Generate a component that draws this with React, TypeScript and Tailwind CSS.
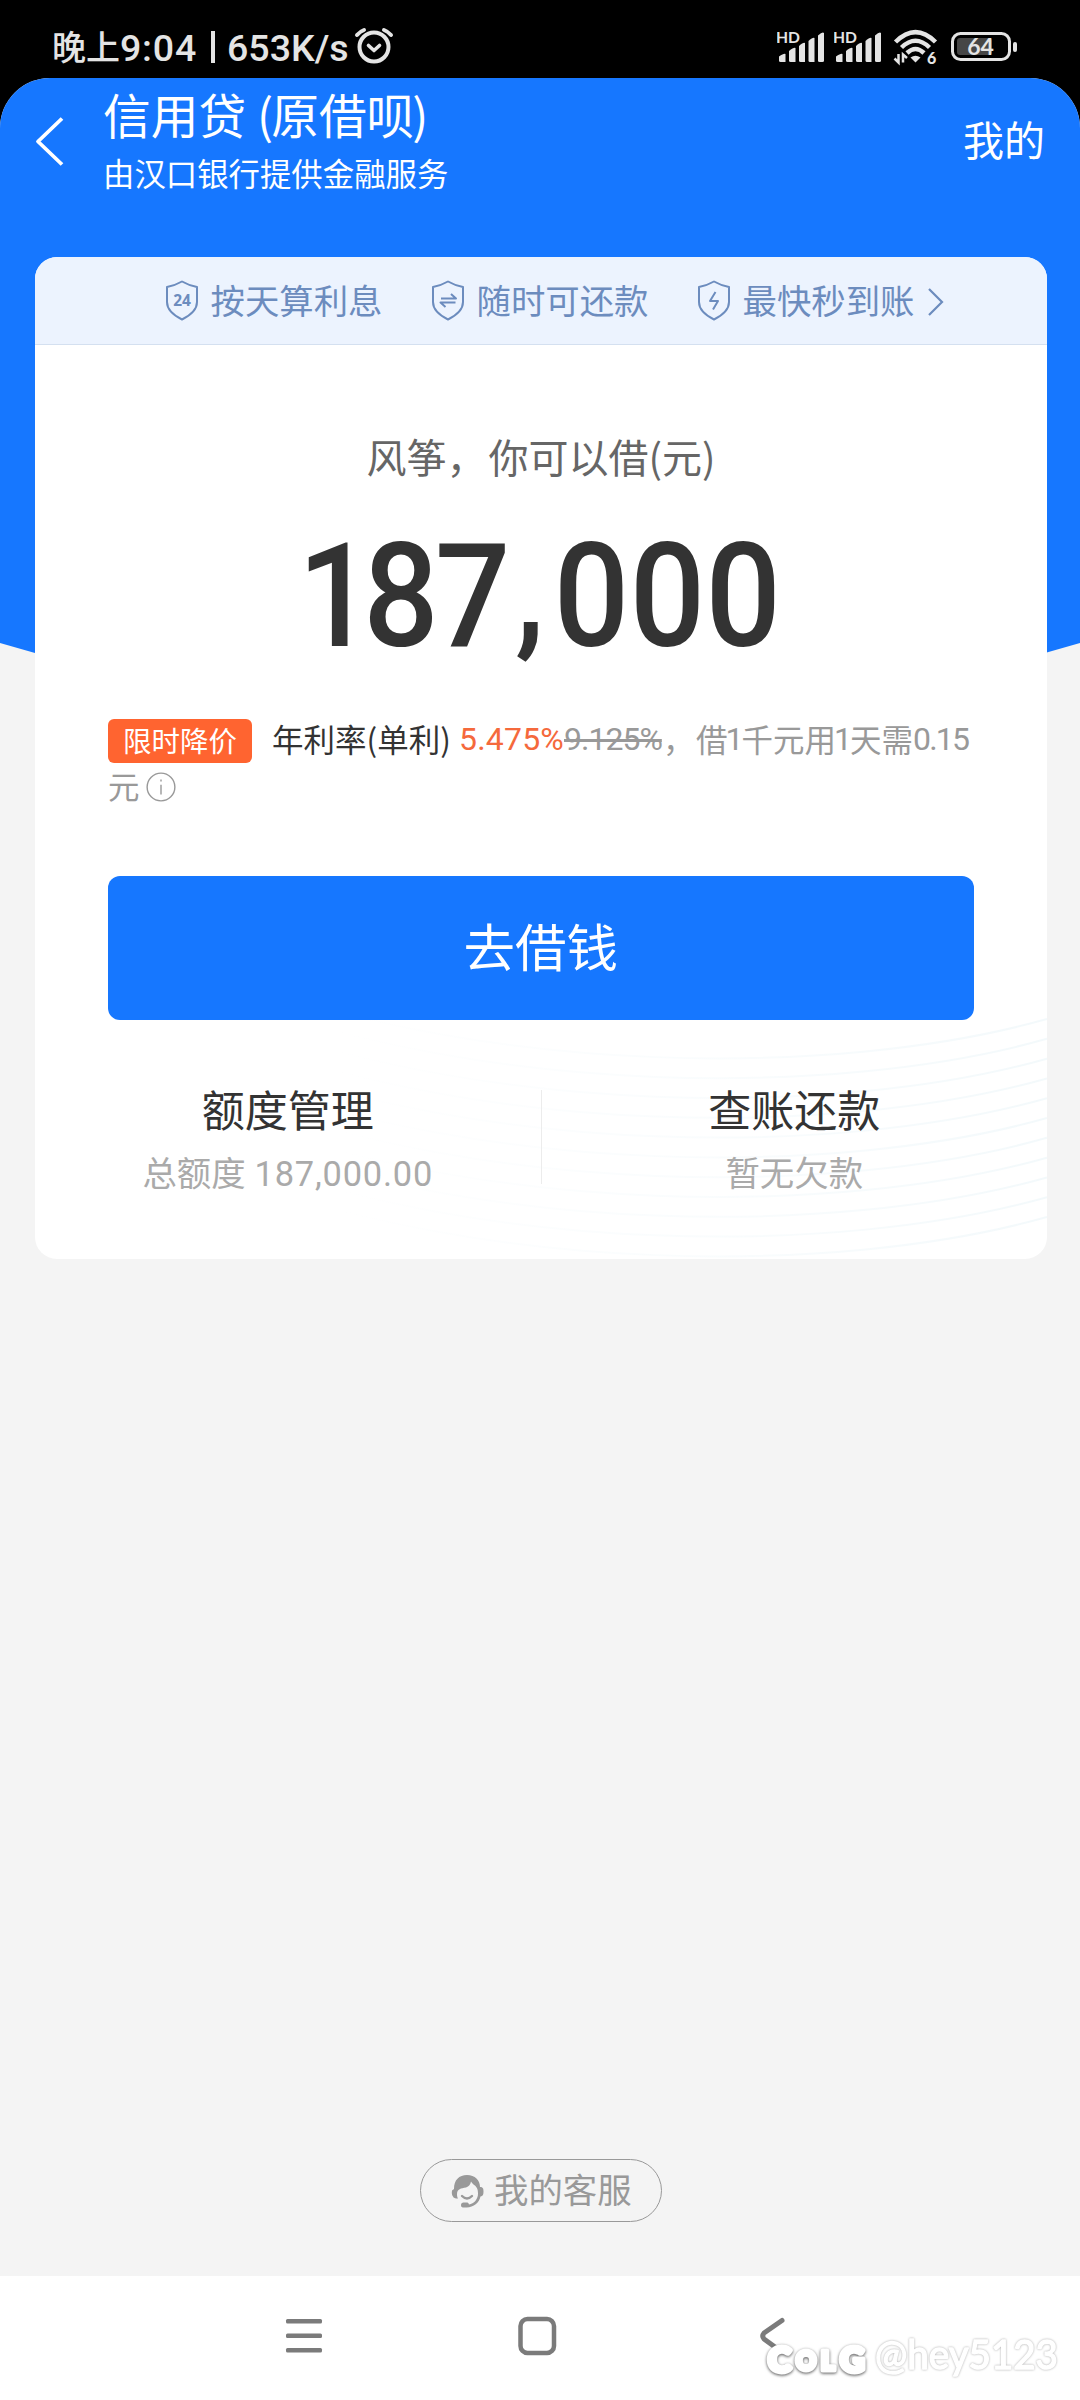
import React from "react";

const CJK = "font-['Noto_Sans_CJK_SC',sans-serif]";

function SignalBars() {
  return (
    <svg className="h-[36px] w-[50px]" viewBox="0 0 50 36" fill="#e4e4e4">
      <text x="-1" y="13.5" fontFamily="Lato, sans-serif" fontWeight="700" fontSize="15.5" textLength="24" lengthAdjust="spacingAndGlyphs">HD</text>
      <path d="M2 27.5Q7 24 8.500 25V33H3.500Q2 33 2 31.500Z" />
      <path d="M12 22Q17 18 18.500 19V33H13.500Q12 33 12 31.500Z" />
      <path d="M22 17Q26.500 13 28 14V33H23.500Q22 33 22 31.500Z" />
      <path d="M31.500 12Q36 8 37.500 9V33H33Q31.500 33 31.500 31.500Z" />
      <path d="M41 6.500Q45.500 2.500 47 4V31.500Q47 33 45.500 33H42.500Q41 33 41 31.500Z" />
    </svg>
  );
}

function StatusBar() {
  return (
    <div className="flex h-[78px] shrink-0 items-start text-[#e4e4e4]">
      <div className="ml-[52px] mt-[24px] flex h-[48px] items-center whitespace-nowrap text-[33px] font-medium leading-[48px]">
        <span className="mt-[-5px] w-[68px] text-[34px]">晚上</span>
        <span className="w-[91px] font-['Roboto',sans-serif] text-[37.500px] font-medium tracking-[0.800px]">9:04</span>
        <span className="mr-[12px] mt-[-2px] h-[32px] w-[4px] bg-[#e4e4e4]" />
        <span className="font-['Roboto',sans-serif] text-[37.500px] font-medium">653K/s</span>
      </div>
      <svg className="absolute left-[353px] top-[26px] h-[40px] w-[42px]" viewBox="0 0 42 40" fill="none" stroke="#e4e4e4" strokeWidth="4" strokeLinecap="round" strokeLinejoin="round">
        <circle cx="21" cy="21" r="14.500" />
        <path d="M15.500 19.500l5.500 5 5.500-5" strokeWidth="3.600" />
        <path d="M4 9Q7 5.500 11 4M38 9Q35 5.500 31 4" />
      </svg>
      <div className="ml-auto mr-[61px] mt-[29px] flex">
        <SignalBars />
        <span className="w-[7px]" />
        <SignalBars />
        <svg className="ml-[9px] h-[38px] w-[46px]" viewBox="0 0 46 38" fill="none" stroke="#e4e4e4" strokeWidth="4.500">
          <path d="M2.500 13Q22.500 -7 42.500 13" />
          <path d="M8.500 18.500Q22.500 5 36.500 18.500" />
          <path d="M14 24Q22.500 16 31 24" />
          <path d="M17.500 28.500Q22.500 25 27.500 28.500L22.500 33.500Z" fill="#e4e4e4" stroke="none" />
          <path d="M5.500 25v8.500l-4-4M10 33.500v-8l4 3.500" strokeWidth="2.500" />
          <text x="34" y="35" fontFamily="Lato, sans-serif" fontWeight="900" fontSize="16" fill="#e4e4e4" stroke="none">6</text>
        </svg>
        <svg className="ml-[12px] mt-[2px] h-[32px] w-[68px]" viewBox="0 0 68 32">
          <rect x="1.500" y="2.500" width="57" height="26" rx="8" fill="none" stroke="#e4e4e4" strokeWidth="3" />
          <rect x="6" y="7" width="35" height="17" rx="3" fill="#464646" />
          <rect x="62" y="11" width="4" height="10" rx="2" fill="#e4e4e4" />
          <text x="29.500" y="24" textAnchor="middle" fontFamily="Lato, sans-serif" fontWeight="700" fontSize="23" fill="#e4e4e4">64</text>
        </svg>
      </div>
    </div>
  );
}

function Header() {
  return (
    <header className="flex h-[178.500px] text-white">
      <svg className="ml-[34px] mt-[37px] h-[52px] w-[32px]" viewBox="0 0 32 52" fill="none" stroke="white" strokeWidth="3.800" strokeLinejoin="round">
        <path d="M28 3.500L4 26.500 28 49.500" />
      </svg>
      <div className="ml-[37px] mt-[6px] whitespace-nowrap">
        <h1 className="h-[60px] text-[47.700px] font-normal leading-[60px]">
          信用贷<span className="ml-[11px] mr-[-2px]">(</span>原借呗<span className="ml-[-2px]">)</span>
        </h1>
        <p className="mt-[9px] h-[40px] text-[31.400px] leading-[40px]">由汉口银行提供金融服务</p>
      </div>
      <div className="ml-auto mr-[35px] mt-[34px] h-[56px] text-[41px] leading-[52px]">我的</div>
    </header>
  );
}

function Shield({ children }: { children: React.ReactNode }) {
  return (
    <svg className="mr-[11.500px] mt-[2px] h-[42px] w-[34px] shrink-0" viewBox="0 0 34 42" fill="none" stroke="#6c8cbe" strokeWidth="2" strokeLinejoin="round">
      <path d="M17 1.500Q24 5.500 32 7V22Q32 32 17 39.500Q2 32 2 22V7Q10 5.500 17 1.500Z" />
      {children}
    </svg>
  );
}

function Features() {
  return (
    <div className="flex h-[88.500px] items-center border-b border-[#d4e0f0] bg-[#ecf3fe] pl-[130px] text-[34.400px] leading-[48px] text-[#6c8cbe]">
      <div className="flex w-[266px] items-center">
        <Shield>
          <text x="17" y="25.500" textAnchor="middle" fontFamily="Open Sans, sans-serif" fontWeight="700" fontSize="15.500" fill="#6c8cbe" stroke="none">24</text>
        </Shield>
        <span className="mt-[-3px] whitespace-nowrap">按天算利息</span>
      </div>
      <div className="flex w-[266px] items-center">
        <Shield>
          <path d="M10 18.500h15l-5-4.500M24.500 22.500h-15l5 4.500" />
        </Shield>
        <span className="mt-[-3px] whitespace-nowrap">随时可还款</span>
      </div>
      <div className="flex items-center">
        <Shield>
          <path d="M18.500 12l-5.500 9h8l-5 8.500" />
        </Shield>
        <span className="mt-[-3px] whitespace-nowrap">最快秒到账</span>
        <svg className="ml-[13px] mt-[3px] h-[30px] w-[18px]" viewBox="0 0 18 30" fill="none" stroke="#6c8cbe" strokeWidth="2.200">
          <path d="M2 2l13 13L2 28" />
        </svg>
      </div>
    </div>
  );
}

const waves = [0, 1, 2, 3, 4, 5, 6, 7, 8, 9, 10];

function Waves() {
  return (
    <svg className="pointer-events-none absolute bottom-0 left-0 h-[260px] w-[1012px]" viewBox="0 0 1012 260" fill="none">
      <defs>
        <linearGradient id="waveFade" gradientUnits="userSpaceOnUse" x1="300" y1="0" x2="1012" y2="0">
          <stop offset="0" stopColor="#f5fafc" stopOpacity="0" />
          <stop offset="0.500" stopColor="#f5fafc" stopOpacity="0.500" />
          <stop offset="1" stopColor="#f3f9fb" />
        </linearGradient>
      </defs>
      {waves.map((i) => (
        <path
          key={i}
          d="M200 -20C450 75 800 80 1012 20"
          transform={`translate(0 ${i * 19.8})`}
          stroke="url(#waveFade)"
          strokeWidth="2"
        />
      ))}
    </svg>
  );
}

function Column({ title, children }: { title: string; children: React.ReactNode }) {
  return (
    <div className="flex flex-1 flex-col items-center whitespace-nowrap">
      <div className="h-[56px] text-[43px] leading-[56px] text-[#333]">{title}</div>
      <div className="mt-[11px] h-[48px] text-[34.400px] leading-[48px] text-[#aaa]">{children}</div>
    </div>
  );
}

function LoanCard() {
  return (
    <section className="relative ml-[35px] h-[1002.500px] w-[1012px] overflow-hidden rounded-[22px] bg-white">
      <Waves />
      <div className="relative">
        <Features />
        <div className="mt-[84.500px] h-[52px] text-center text-[40px] leading-[52px] text-[#666]">
          风筝，<span className="ml-[2px]">你可以借</span>(元)
        </div>
        <div className="mt-[24px] flex h-[180px] origin-center scale-x-[0.915] justify-center pr-[3px] font-['Roboto',sans-serif] text-[145px] font-medium leading-[180px] text-[#333]">
          <span className="tracking-[-11px]">1</span>
          <span className="tracking-[-4px]">8</span>
          <span>7</span>
          <span className="ml-[5px] mr-[10px] mt-[-8px]">,</span>
          <span className="tracking-[0.500px]">000</span>
        </div>
        <div className="mt-[27.500px] flex h-[50px] items-center whitespace-nowrap pl-[73px] text-[31.500px] leading-[50px] text-[#999]">
          <span className="mr-[20px] mt-[6px] flex h-[44px] w-[144px] shrink-0 items-center justify-center rounded-[6px] bg-[#ff6430] text-[28.500px] text-white">
            <span className="mt-[-3px]">限时降价</span>
          </span>
          <span className="w-[187px] text-[#333]">年利率(单利)</span>
          <span className="mt-[2px] w-[105px] font-['Roboto',sans-serif] text-[32px] tracking-[0.200px] text-[#f5693c]">5.475%</span>
          <span className="mt-[2px] w-[99px] font-['Roboto',sans-serif] text-[32px] tracking-[-1px] line-through decoration-[3px]">9.125%</span>
          <span className="w-[33px]">，</span>
          <span>借</span>
          <span className="mx-[-2px] mt-[2px] font-['Roboto',sans-serif] text-[32px]">1</span>
          <span>千元用</span>
          <span className="mx-[-2px] mt-[2px] font-['Roboto',sans-serif] text-[32px]">1</span>
          <span>天需</span>
          <span className="mt-[2px] font-['Roboto',sans-serif] text-[32px] tracking-[-1.800px]">0.15</span>
        </div>
        <div className="flex h-[45px] items-center pl-[73px] text-[31.500px] leading-[45px] text-[#999]">
          <span>元</span>
          <svg className="ml-[6px] mt-[3px] h-[30px] w-[30px]" viewBox="0 0 32 32" fill="none" stroke="#999" strokeWidth="1.500">
            <circle cx="16" cy="16" r="14.800" />
            <path d="M16 13.500V24M16 8v2" />
          </svg>
        </div>
        <button className="ml-[73px] mt-[68px] block h-[143.500px] w-[865.500px] rounded-[12px] bg-[#1677ff] text-center text-[51.500px] leading-[137px] text-white">
          <span className="block h-full">去借钱</span>
        </button>
        <div className="relative mt-[60px] flex">
          <Column title="额度管理">
            总额度<span className="ml-[9px] font-['Roboto',sans-serif] tracking-[0.800px]">187,000.00</span>
          </Column>
          <div className="mt-[10px] h-[94px] w-px bg-[#ececec]" />
          <Column title="查账还款">暂无欠款</Column>
        </div>
      </div>
    </section>
  );
}

function ServicePill() {
  return (
    <button className="mb-[54px] ml-[420px] mt-auto flex h-[63px] w-[242px] items-center rounded-full border border-[#999] pl-[29px] text-[34.400px] leading-[48px] text-[#999]">
      <svg className="mr-[10px] h-[34px] w-[34px]" viewBox="0 0 34 34" fill="#999">
        <path d="M4 15C4 6 9 1 17 1s13 5 13 12c3 0 3.500 1.500 3.500 4.500S33 22 30.500 22.500C29 29 24 33 16.500 33.500H13c-1.500 0-2-1-2-2.500s1-2.500 2.500-2.500h3c1.500 0 2 .5 2.500 2 5-1 9-5 9-11 0-5-1.500-7-4.500-9-1-1-2-2-2.500-3-.5 3-2 5-5 6-5 1-9 1-9 7 0 2 .5 3 1 4-3 0-4.500-.5-5-2-1-1-1.500-3-1-6z" />
        <path d="M12 22q5 5 10 0" fill="none" stroke="#999" strokeWidth="2.400" strokeLinecap="round" />
      </svg>
      <span className="mt-[-6px] whitespace-nowrap">我的客服</span>
    </button>
  );
}

function NavBar() {
  return (
    <nav className="relative flex h-[124px] shrink-0 items-start bg-white">
      <svg className="ml-[284px] mt-[39px] h-[42px] w-[40px]" viewBox="0 0 40 42" fill="#7b7b7b">
        <rect x="2" y="4" width="36" height="4.500" rx="1.500" />
        <rect x="2" y="18.500" width="36" height="4.500" rx="1.500" />
        <rect x="2" y="33" width="36" height="4.500" rx="1.500" />
      </svg>
      <svg className="ml-[192px] mt-[39px] h-[42px] w-[42px]" viewBox="0 0 42 42" fill="none" stroke="#7b7b7b" strokeWidth="4.500">
        <rect x="4.500" y="4" width="33.500" height="34" rx="7" />
      </svg>
      <svg className="ml-[200px] mt-[39px] h-[42px] w-[30px]" viewBox="0 0 30 42" fill="none" stroke="#7b7b7b" strokeWidth="5" strokeLinecap="round" strokeLinejoin="round">
        <path d="M24 5.500L6 18Q3.500 21 6 24L17 32" />
      </svg>
      <svg className="absolute left-[760px] top-[54px] h-[60px] w-[310px]" viewBox="0 0 310 60">
        <g fontFamily="Lato, sans-serif" fontWeight="900" fill="white" stroke="white" strokeWidth="5" strokeLinejoin="round" className="[filter:drop-shadow(0_1px_1.500px_#555)]">
          <text x="8" y="42" fontSize="35">C</text>
          <text x="36" y="40" fontSize="27" textLength="20" lengthAdjust="spacingAndGlyphs">O</text>
          <text x="61" y="40" fontSize="26">L</text>
          <text x="80" y="42" fontSize="34">G</text>
        </g>
        <text x="115" y="39" textLength="183" lengthAdjust="spacingAndGlyphs" fontFamily="Lato, sans-serif" fontSize="40" fill="white" stroke="white" strokeWidth="1.500" strokeLinejoin="round" className="[filter:drop-shadow(0_0_1px_#aaa)]">@hey5123</text>
      </svg>
    </nav>
  );
}

export default function App() {
  return (
    <div className={`${CJK} relative flex h-[2400px] w-[1080px] flex-col overflow-hidden bg-black`}>
      <StatusBar />
      <main className="grid min-h-0 flex-1 grid-cols-1 grid-rows-1 overflow-hidden rounded-t-[50px] bg-[#f4f4f4]">
        <div className="h-[575px] bg-[#1677ff] [clip-path:polygon(0_0,100%_0,100%_565px,1045px_575px,35px_575px,0_565px)] [grid-area:1/1]" />
        <div className="relative flex flex-col [grid-area:1/1]">
          <Header />
          <LoanCard />
          <ServicePill />
        </div>
      </main>
      <NavBar />
    </div>
  );
}
